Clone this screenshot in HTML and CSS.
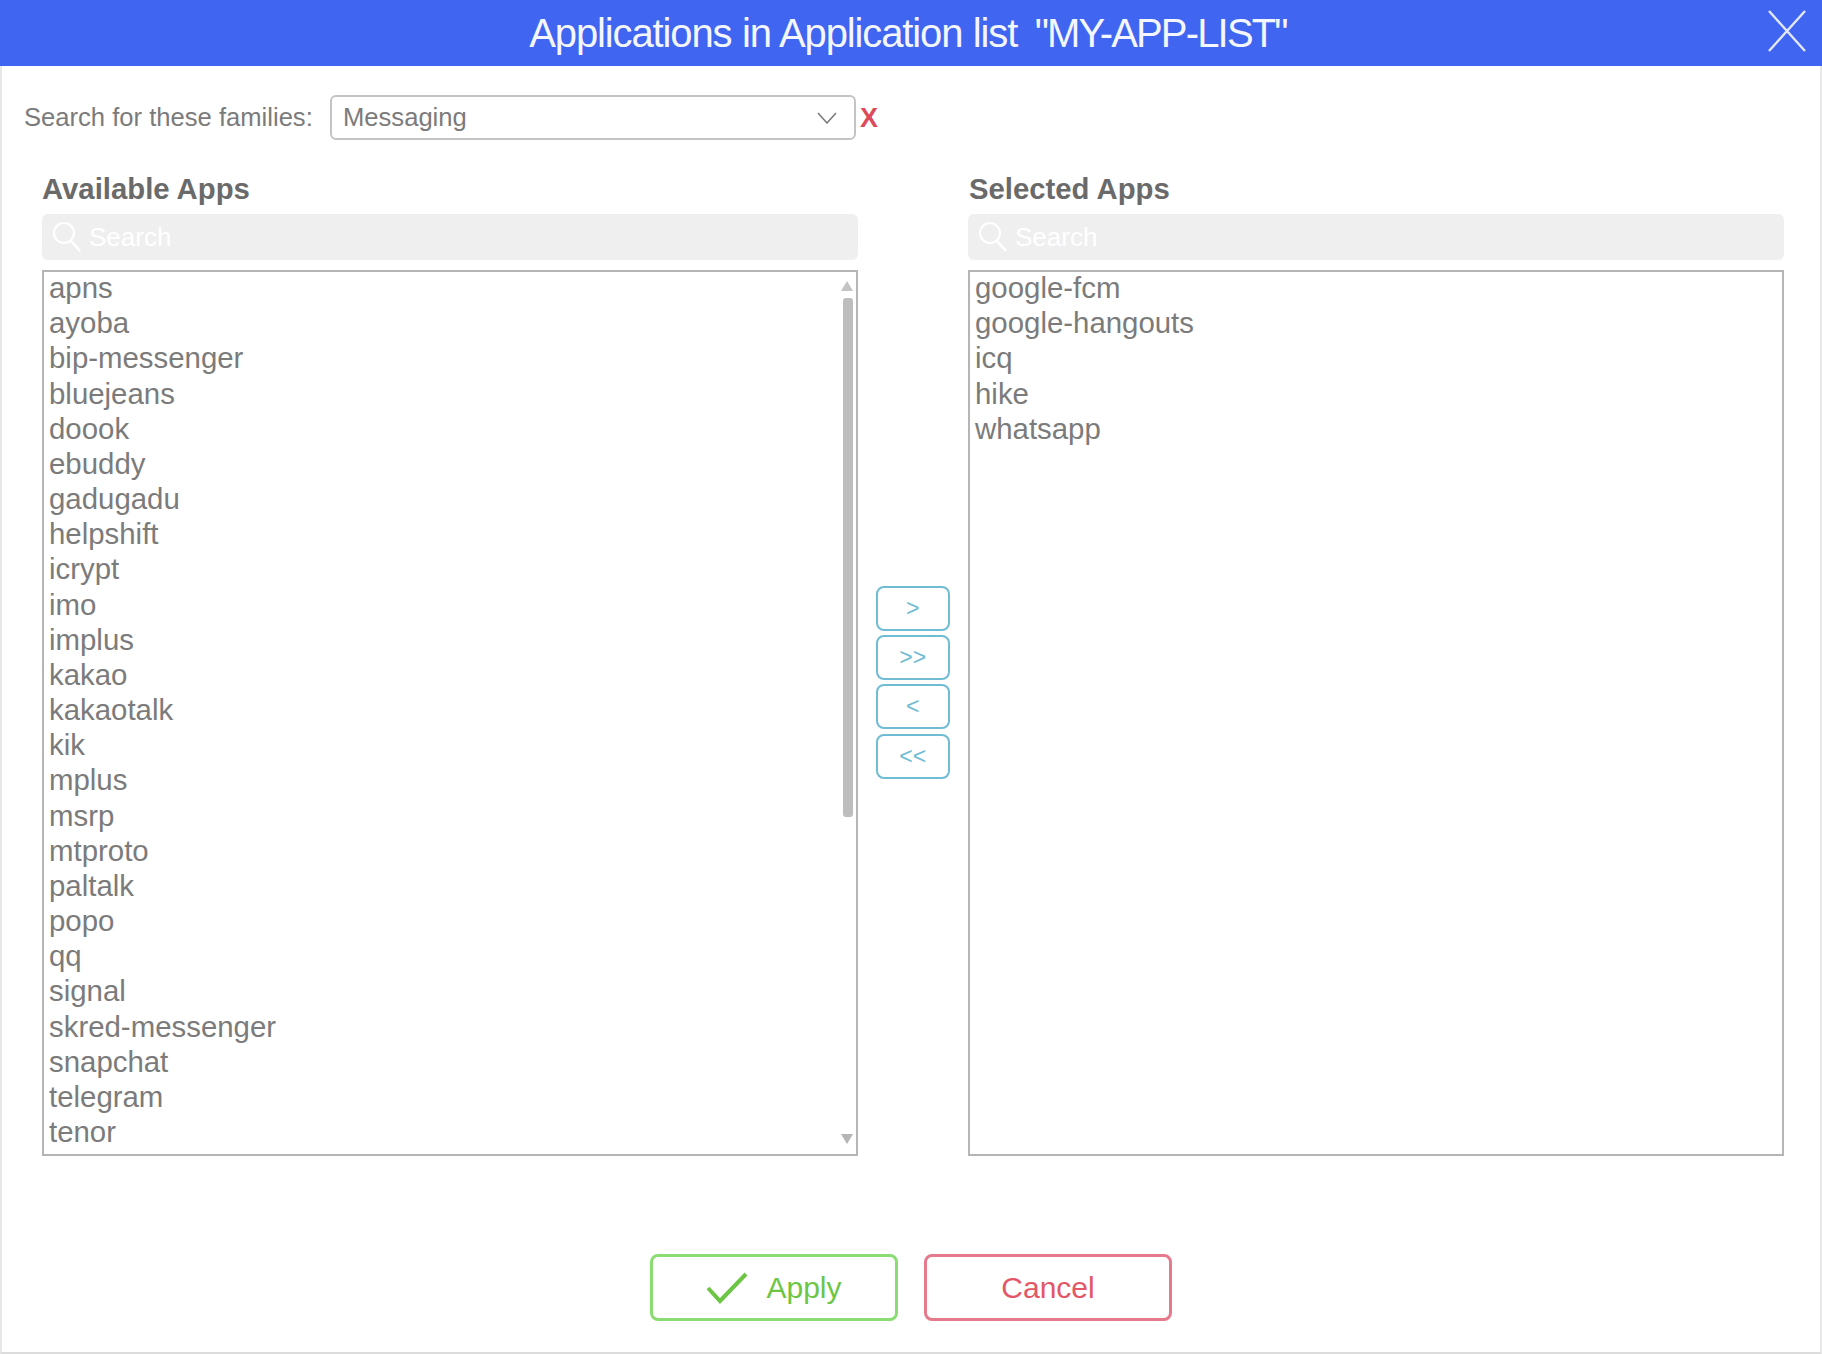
FILE: index.html
```html
<!DOCTYPE html>
<html lang="en">
<head>
<meta charset="utf-8">
<title>Applications in Application list</title>
<link rel="stylesheet" href="styles.css">
</head>
<body>
<div class="modal">
  <header class="titlebar">
    <h1 class="title">Applications in Application list <span class="title-name">"MY-APP-LIST"</span></h1>
    <svg class="close" viewBox="0 0 38 42" width="38" height="42"><path d="M1 1 L37 41 M37 1 L1 41" stroke="#fff" stroke-width="2.4" fill="none" opacity=".85"/></svg>
  </header>
  <div class="filter">
    <span class="filter-label">Search for these families:</span>
    <div class="select">
      <span>Messaging</span>
      <svg viewBox="0 0 20 12" width="20" height="12"><path d="M1 1 L10 11 L19 1" stroke="#777" stroke-width="1.5" fill="none"/></svg>
    </div>
    <span class="clear">X</span>
  </div>
  <div class="panes">
    <section class="pane">
      <h2 class="pane-title">Available Apps</h2>
      <div class="search">
        <svg viewBox="0 0 30 34" width="30" height="34"><circle cx="12" cy="13" r="10" stroke="#fff" stroke-width="2" fill="none"/><path d="M19 21 L28 31" stroke="#fff" stroke-width="2.6"/></svg>
        <span>Search</span>
      </div>
      <div class="list">
        <div>apns</div><div>ayoba</div><div>bip-messenger</div><div>bluejeans</div><div>doook</div><div>ebuddy</div><div>gadugadu</div><div>helpshift</div><div>icrypt</div><div>imo</div><div>implus</div><div>kakao</div><div>kakaotalk</div><div>kik</div><div>mplus</div><div>msrp</div><div>mtproto</div><div>paltalk</div><div>popo</div><div>qq</div><div>signal</div><div>skred-messenger</div><div>snapchat</div><div>telegram</div><div>tenor</div>
        <i class="arrow-up"></i>
        <i class="thumb"></i>
        <i class="arrow-down"></i>
      </div>
    </section>
    <div class="movers">
      <button class="mover">&gt;</button>
      <button class="mover">&gt;&gt;</button>
      <button class="mover">&lt;</button>
      <button class="mover">&lt;&lt;</button>
    </div>
    <section class="pane">
      <h2 class="pane-title selected">Selected Apps</h2>
      <div class="search">
        <svg viewBox="0 0 30 34" width="30" height="34"><circle cx="12" cy="13" r="10" stroke="#fff" stroke-width="2" fill="none"/><path d="M19 21 L28 31" stroke="#fff" stroke-width="2.6"/></svg>
        <span>Search</span>
      </div>
      <div class="list">
        <div>google-fcm</div><div>google-hangouts</div><div>icq</div><div>hike</div><div>whatsapp</div>
      </div>
    </section>
  </div>
  <footer class="actions">
    <button class="btn apply">
      <svg viewBox="0 0 42 32" width="42" height="32"><path d="M2 16 L14 29 L40 2" stroke="#6cc644" stroke-width="4" fill="none"/></svg>
      <span>Apply</span>
    </button>
    <button class="btn cancel">Cancel</button>
  </footer>
</div>
</body>
</html>
```
FILE: styles.css
```css
* { box-sizing: border-box; }
html, body { margin: 0; padding: 0; background: #fff; }
body { font-family: "Liberation Sans", Arial, sans-serif; color: #7b7b7b; }
.modal {
  width: 1822px; height: 1354px;
  display: flex; flex-direction: column;
  border-left: 2px solid #e8e8e8; border-right: 2px solid #e8e8e8; border-bottom: 2px solid #dcdcdc;
}
.titlebar {
  height: 66px; margin: 0 -2px; flex: none;
  background: #4065f0; color: #f4f6fe;
  display: flex; align-items: center; justify-content: center;
  position: relative; padding-right: 6px;
}
.title { margin: 0; font-size: 40px; font-weight: 400; line-height: 66px; letter-spacing: -1.13px; word-spacing: .5px; }
.title-name { letter-spacing: -1.83px; margin-left: 7px; }
.close { position: absolute; right: 16px; top: 10px; }
.filter { display: flex; align-items: center; height: 45px; margin-top: 29px; padding-left: 22px; flex: none; }
.filter-label { font-size: 25.6px; width: 306px; }
.select {
  width: 526px; height: 45px; border: 2px solid #c4c4c4; border-radius: 6px;
  display: flex; align-items: center; justify-content: space-between;
  padding: 0 17px 0 11px; font-size: 25.6px;
}
.clear { color: #dd4a5a; font-size: 27px; font-weight: 700; margin: 2px 0 0 4px; line-height: 1; }
.panes { display: flex; padding: 0 36px 0 40px; margin-top: 29px; flex: none; }
.pane { width: 816px; flex: none; display: flex; flex-direction: column; }
.pane-title { margin: 0; height: 45px; line-height: 40px; font-size: 29.3px; font-weight: 700; color: #6a6a6a; }
.pane-title.selected { padding-left: 1px; }
.search {
  height: 46px; background: #efefef; border-radius: 6px; color: #fff; flex: none;
  display: flex; align-items: center; gap: 7px; padding-left: 10px; font-size: 26px;
}
.list {
  position: relative; margin-top: 10px; height: 886px; flex: none;
  border: 2px solid #b5b5b5; padding: 0 5px; overflow: hidden;
  font-size: 29.4px; line-height: 35.17px; color: #7b7b7b;
}
.list > div:first-child { margin-top: -2px; }
.movers { width: 110px; flex: none; display: flex; flex-direction: column; gap: 4.2px; padding: 417px 0 0 18px; }
.mover {
  width: 73.5px; height: 45px; background: #fff; border: 2px solid #6fbcd4; border-radius: 8px;
  color: #6fbcd4; font: 400 23px "Liberation Sans", Arial, sans-serif; padding: 0;
}
.thumb { position: absolute; right: 3px; top: 26px; width: 10px; height: 519px; background: #bdbdbd; border-radius: 3px; }
.arrow-up, .arrow-down { position: absolute; right: 3px; width: 0; height: 0; border-left: 6px solid transparent; border-right: 6px solid transparent; }
.arrow-up { top: 9px; border-bottom: 10px solid #c4c4c4; }
.arrow-down { bottom: 10px; border-top: 10px solid #b5b5b5; }
.actions { display: flex; justify-content: center; gap: 26px; margin-top: 98px; flex: none; }
.btn {
  width: 248px; height: 67px; background: #fff; border-radius: 8px; border: 3px solid;
  font: 400 30px "Liberation Sans", Arial, sans-serif; padding: 0;
  display: flex; align-items: center; justify-content: center;
}
.apply { border-color: #8bdc72; color: #6cc644; gap: 18px; }
.cancel { border-color: #e57a8c; color: #e35766; }
```
